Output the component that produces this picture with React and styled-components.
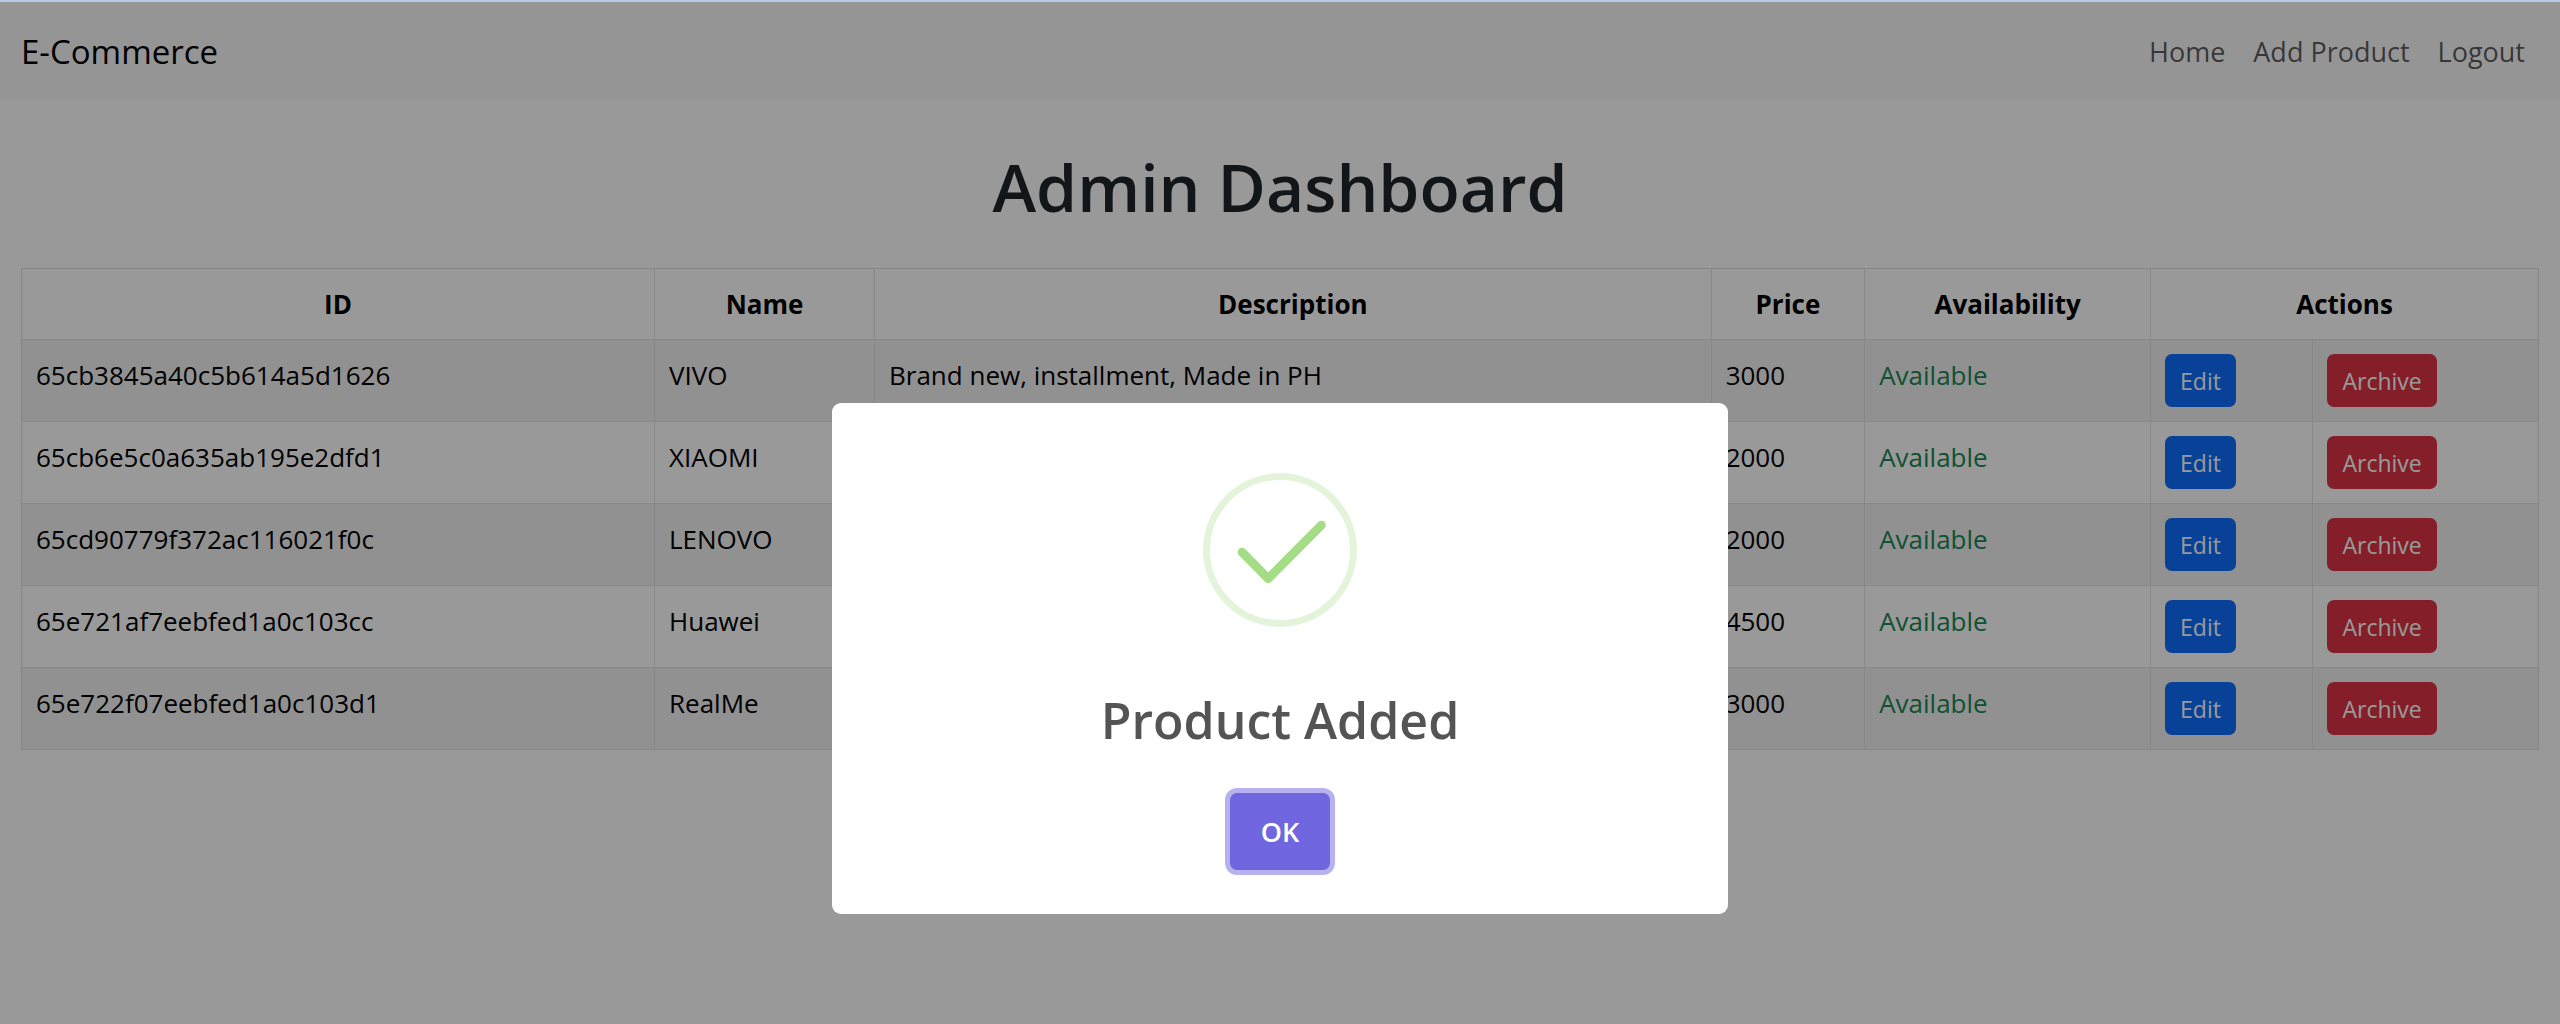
import React, { useState } from "react";
import styled, { createGlobalStyle } from "styled-components";

const GlobalStyle = createGlobalStyle`
  *, *::before, *::after { box-sizing: border-box; }
  body {
    margin: 0;
    background: #fff;
    color: #212529;
    font-family: "Open Sans", "Noto Sans", sans-serif;
    font-size: 26px;
    line-height: 42px;
  }
`;

const Page = styled.div`
  min-height: 100vh;
  border-top: 2px solid #b9c9e3;
`;

const Navbar = styled.nav`
  display: flex;
  align-items: center;
  justify-content: space-between;
  height: 98px;
  padding: 2px 21px 0;
  background: #f8f9fa;
`;

const Brand = styled.a`
  color: #000;
  font-size: 33px;
  text-decoration: none;
`;

const NavLinks = styled.div`
  display: flex;
`;

const NavLink = styled.a`
  padding: 14px;
  color: rgba(0, 0, 0, 0.65);
  font-size: 27px;
  text-decoration: none;
`;

const Main = styled.main`
  padding: 44px 21px;
`;

const Heading = styled.h1`
  margin: 0 0 40px;
  font-size: 66px;
  font-weight: 600;
  line-height: 84px;
  text-align: center;
`;

const Table = styled.table`
  width: 100%;
  table-layout: fixed;
  border-collapse: collapse;
  color: #000;
`;

const Col = styled.col`
  width: ${(p) => p.$share}%;
`;

const HeadCell = styled.th`
  height: 71px;
  padding: 14px;
  border: 1px solid #dee2e6;
  font-weight: 700;
  text-align: center;
`;

const Row = styled.tr`
  &:nth-child(odd) {
    background: #f2f2f2;
  }
`;

const Cell = styled.td`
  height: 82px;
  padding: 14px;
  border: 1px solid #dee2e6;
  color: ${(p) => (p.$available ? "#198754" : "#000")};
  text-align: left;
  vertical-align: top;
`;

const ActionButton = styled.button`
  display: block;
  height: 53px;
  padding: 0 15px;
  border: 0;
  border-radius: 7px;
  background: ${(p) => (p.$danger ? "#dc3545" : "#0d6efd")};
  color: #fff;
  font: inherit;
  font-size: 23px;
  cursor: pointer;
`;

const Backdrop = styled.div`
  position: fixed;
  inset: 2px 0 0;
  display: flex;
  align-items: flex-start;
  justify-content: center;
  padding-top: 401px;
  background: rgba(0, 0, 0, 0.4);
`;

const Dialog = styled.div`
  display: flex;
  flex-direction: column;
  align-items: center;
  width: 896px;
  max-width: 100%;
  padding: 70px 0 44px;
  border-radius: 9px;
  background: #fff;
`;

const SuccessIcon = styled.svg`
  width: 154px;
  height: 154px;
  fill: none;
`;

const DialogTitle = styled.h2`
  margin: 60px 0 40px;
  color: #545454;
  font-size: 50px;
  font-weight: 600;
  line-height: 66px;
`;

const ConfirmButton = styled.button`
  width: 100px;
  height: 77px;
  border: 0;
  border-radius: 7px;
  background: #7066e0;
  box-shadow: 0 0 0 5px rgba(112, 102, 224, 0.5);
  color: #fff;
  font: inherit;
  font-size: 27px;
  font-weight: 600;
  cursor: pointer;
`;

const shares = [25.15, 8.74, 33.24, 6.1, 11.36, 6.45, 8.96];

const products = [
  { id: "65cb3845a40c5b614a5d1626", name: "VIVO", description: "Brand new, installment, Made in PH", price: 3000 },
  { id: "65cb6e5c0a635ab195e2dfd1", name: "XIAOMI", description: "", price: 2000 },
  { id: "65cd90779f372ac116021f0c", name: "LENOVO", description: "", price: 2000 },
  { id: "65e721af7eebfed1a0c103cc", name: "Huawei", description: "", price: 4500 },
  { id: "65e722f07eebfed1a0c103d1", name: "RealMe", description: "", price: 3000 },
];

function ProductTable() {
  return (
    <Table>
      <colgroup>
        {shares.map((share, i) => (
          <Col key={i} $share={share} />
        ))}
      </colgroup>
      <thead>
        <tr>
          <HeadCell>ID</HeadCell>
          <HeadCell>Name</HeadCell>
          <HeadCell>Description</HeadCell>
          <HeadCell>Price</HeadCell>
          <HeadCell>Availability</HeadCell>
          <HeadCell colSpan={2}>Actions</HeadCell>
        </tr>
      </thead>
      <tbody>
        {products.map((p) => (
          <Row key={p.id}>
            <Cell>{p.id}</Cell>
            <Cell>{p.name}</Cell>
            <Cell>{p.description}</Cell>
            <Cell>{p.price}</Cell>
            <Cell $available>Available</Cell>
            <Cell>
              <ActionButton type="button">Edit</ActionButton>
            </Cell>
            <Cell>
              <ActionButton type="button" $danger>Archive</ActionButton>
            </Cell>
          </Row>
        ))}
      </tbody>
    </Table>
  );
}

function SuccessDialog({ onClose }) {
  return (
    <Backdrop>
      <Dialog role="dialog" aria-modal="true" aria-labelledby="dialog-title">
        <SuccessIcon viewBox="0 0 154 154" aria-hidden="true">
          <circle cx="77" cy="77" r="73.5" stroke="#a5dc86" strokeOpacity="0.3" strokeWidth="7" />
          <path
            d="M39 79.2 L65.2 105.6 L118.4 52.2"
            stroke="#a5dc86"
            strokeWidth="8.75"
            strokeLinecap="round"
            strokeLinejoin="round"
          />
        </SuccessIcon>
        <DialogTitle id="dialog-title">Product Added</DialogTitle>
        <ConfirmButton type="button" onClick={onClose}>OK</ConfirmButton>
      </Dialog>
    </Backdrop>
  );
}

export default function App() {
  const [open, setOpen] = useState(true);
  return (
    <Page>
      <GlobalStyle />
      <Navbar>
        <Brand href="#">E-Commerce</Brand>
        <NavLinks>
          <NavLink href="#home">Home</NavLink>
          <NavLink href="#add">Add Product</NavLink>
          <NavLink href="#logout">Logout</NavLink>
        </NavLinks>
      </Navbar>
      <Main>
        <Heading>Admin Dashboard</Heading>
        <ProductTable />
      </Main>
      {open && <SuccessDialog onClose={() => setOpen(false)} />}
    </Page>
  );
}
